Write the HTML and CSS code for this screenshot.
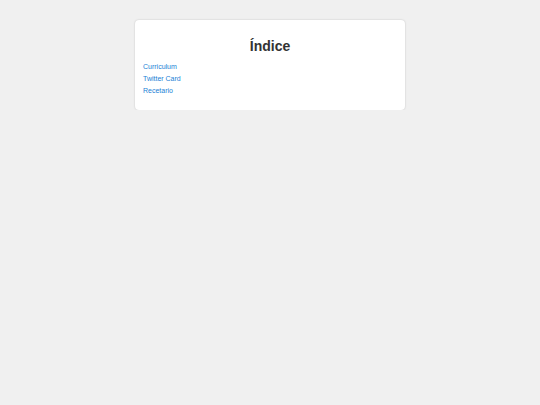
FILE: index.html
```html
<!DOCTYPE html>
<html lang="es">
<head>
<meta charset="utf-8">
<title>Índice</title>
<link rel="stylesheet" href="styles.css">
</head>
<body>
<main class="card">
  <h1 class="title">Índice</h1>
  <ul class="links">
    <li><a href="#">Curriculum</a></li>
    <li><a href="#">Twitter Card</a></li>
    <li><a href="#">Recetario</a></li>
  </ul>
</main>
</body>
</html>
```
FILE: styles.css
```css
html, body {
  margin: 0;
  padding: 0;
  background: #f0f0f0;
  font-family: "Liberation Sans", Arial, sans-serif;
}
body {
  padding-top: 20px;
}
.card {
  width: 270px;
  box-sizing: border-box;
  margin: 0 auto;
  background: #fff;
  border-radius: 4px;
  box-shadow: 0 0 2px rgba(0, 0, 0, 0.2);
  padding: 18px 8px 13px;
}
.title {
  margin: 0 0 7px;
  text-align: center;
  font-size: 14px;
  line-height: 16px;
  font-weight: bold;
  color: #333;
}
.links {
  list-style: none;
  margin: 0;
  padding: 0;
}
.links li {
  font-size: 7px;
  line-height: 12px;
}
.links a {
  color: #1a7fd6;
  text-decoration: none;
}
```
